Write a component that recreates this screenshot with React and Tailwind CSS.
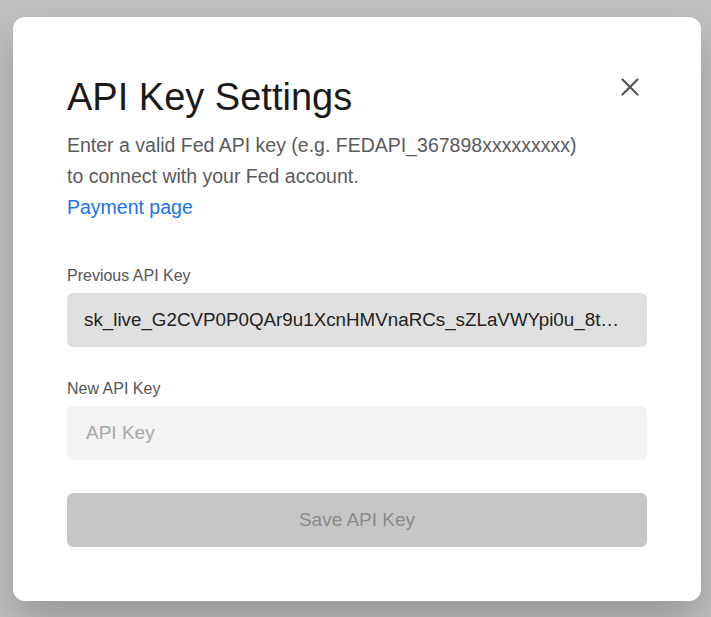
import React from "react";

export default function App() {
  return (
    <div className="min-h-screen w-full bg-[#c1c1c1] pt-[17px] pl-[13px] font-['Liberation_Sans',Arial,sans-serif]">
      <div className="relative flex h-[584px] w-[688px] flex-col rounded-[12px] bg-white px-[54px] pt-[60px] shadow-[0_20px_40px_rgba(0,0,0,0.22)]">
        <button className="absolute right-[59px] top-[58px] text-[#555]" aria-label="Close">
          <svg width="24" height="24" viewBox="0 0 24 24" fill="none" stroke="currentColor" strokeWidth="2.2" strokeLinecap="round">
            <path d="M4.5 4.5L19.5 19.5M19.5 4.5L4.5 19.5" />
          </svg>
        </button>
        <h1 className="text-[38px] leading-[40px] text-[#1a1a1a]">API Key Settings</h1>
        <p className="mt-[13px] text-[19.5px] leading-[31px] text-[#5a5a5a]">
          Enter a valid Fed API key (e.g. FEDAPI_367898xxxxxxxxx)
          <br />
          to connect with your Fed account.
        </p>
        <a href="#" className="text-[19.5px] leading-[31px] text-[#1a73e8]">Payment page</a>

        <label className="mt-[43px] text-[16px] leading-[20px] text-[#555]">Previous API Key</label>
        <div className="mt-[7px] flex h-[54px] items-center overflow-hidden rounded-[6px] bg-[#e0e0e0] px-[17px] text-[18.8px] text-[#222]">
          <span className="whitespace-nowrap">sk_live_G2CVP0P0QAr9u1XcnHMVnaRCs_sZLaVWYpi0u_8t…</span>
        </div>

        <label className="mt-[32px] text-[16px] leading-[20px] text-[#555]">New API Key</label>
        <input
          placeholder="API Key"
          className="mt-[7px] h-[54px] rounded-[6px] bg-[#f3f3f3] px-[19px] text-[19px] text-[#222] outline-none placeholder:text-[#a8a8a8]"
        />

        <button className="mt-[33px] h-[54px] rounded-[6px] bg-[#c6c6c6] text-[19px] text-[#8b8b8b]">
          Save API Key
        </button>
      </div>
    </div>
  );
}
